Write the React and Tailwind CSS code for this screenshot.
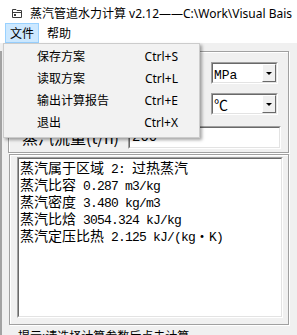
import React from 'react';

const ui = "font-['Noto_Sans','Noto_Sans_CJK_SC',sans-serif]";
const cjk = "font-['Noto_Sans_CJK_SC',sans-serif]";
const mono = "font-['Liberation_Mono','Noto_Sans_CJK_SC',monospace]";

// etched frame like a VB Frame control
const frame = 'border border-[#a0a0a0] shadow-[inset_1px_1px_0_#fff,1px_1px_0_#fff]';

const Sunken = ({ className = '', children }) => (
  <div className={`border border-t-[#a0a0a0] border-l-[#a0a0a0] border-b-white border-r-white ${className}`}>
    <div className="h-full border border-t-[#696969] border-l-[#696969] border-b-[#e3e3e3] border-r-[#e3e3e3] bg-white">
      {children}
    </div>
  </div>
);

const Combo = ({ children }) => (
  <Sunken className="w-[67px] h-[22px]">
    <div className="h-full flex items-center">
      <div className="flex-1 pl-[1px] leading-none text-black">{children}</div>
      <div className="w-[14px] h-[18px] bg-[#f0f0f0] border border-t-white border-l-white border-b-[#696969] border-r-[#696969] flex items-center justify-center">
        <div className="w-0 h-0 border-l-[3px] border-r-[3px] border-t-[3px] border-l-transparent border-r-transparent border-t-black" />
      </div>
    </div>
  </Sunken>
);

// half-width latin run in the result box
const L = ({ children }) => <span className={`${mono} text-[13px] tracking-[-0.8px]`}>{children}</span>;

const menuItems = [
  ['保存方案', 'Ctrl+S'],
  ['读取方案', 'Ctrl+L'],
  ['输出计算报告', 'Ctrl+E'],
  ['退出', 'Ctrl+X'],
];

export default function App() {
  return (
    <div className={`relative w-[297px] h-[335px] overflow-hidden bg-[#f0f0f0] ${ui}`}>
      {/* title bar */}
      <div className="h-[23px] bg-white flex items-start pt-[5px] pl-[11px] whitespace-nowrap">
        <svg width="12" height="11" viewBox="0 0 12 11" className="mt-[3px] shrink-0">
          <path d="M1.5 1.5 H5 L6 2.5 H10.5 V9.5 H1.5 Z" fill="none" stroke="#3c3c3c" strokeWidth="1" />
          <path d="M1.5 4.5 H10.5" stroke="#3c3c3c" strokeWidth="1" />
          <rect x="3" y="6" width="2" height="2" fill="#3c3c3c" />
        </svg>
        <span className="ml-[7px] text-[12px] leading-[18px] text-black">
          蒸汽管道水力计算 v2.12——C:\Work\Visual Bais
        </span>
      </div>

      {/* menu bar */}
      <div className="h-[20px] bg-white flex items-stretch text-[12px] text-black">
        <div className="ml-[5px] w-[34px] h-[20px] bg-[#cce8ff] border border-[#99d1ff] flex items-center justify-center pt-[2px]">
          文件
        </div>
        <div className="ml-[8px] flex items-center pt-[2px]">帮助</div>
      </div>

      {/* form */}
      <div className="h-[292px] border-l-2 border-l-[#a3a3a3]">
        <div className={`ml-[6px] mt-[8px] w-[281px] h-[102px] ${frame} flex flex-col`}>
          <div className="flex flex-col items-end pr-[10px] pt-[10px] gap-[9px]">
            <Combo>
              <span className={`${mono} text-[13px]`}>MPa</span>
            </Combo>
            <Combo>
              <span className={`${cjk} text-[14px]`}>℃</span>
            </Combo>
          </div>
          <div className="flex items-center mt-[11px] pl-[13px]">
            <div className={`w-[106px] ${cjk} text-[16px] leading-[23px] whitespace-nowrap`}>蒸汽流量(t/h)</div>
            <Sunken className="w-[153px] h-[23px]">
              <div className={`pl-[2px] ${mono} text-[14px] leading-[19px]`}>200</div>
            </Sunken>
          </div>
        </div>

        <div className={`ml-[7px] mt-[1px] w-[280px] h-[171px] ${frame} pl-[7px] pt-[2px]`}>
          <Sunken className="w-[266px] h-[161px]">
            <div className={`pl-[1px] pt-[1px] ${cjk} text-[14px] leading-[15px] text-black whitespace-nowrap`}>
              <div>蒸汽属于区域<L> 2: </L>过热蒸汽</div>
              <div>蒸汽比容<L> 0.287 m3/kg</L></div>
              <div>蒸汽密度<L> 3.480 kg/m3</L></div>
              <div>蒸汽比焓<L> 3054.324 kJ/kg</L></div>
              <div>
                蒸汽定压比热<L> 2.125 kJ/(kg</L>
                <span className="inline-block w-[14px] text-center">·</span>
                <L>K)</L>
              </div>
            </div>
          </Sunken>
        </div>

        <div className="mt-[4px] pl-[16px] text-[12px] leading-[16px] text-black whitespace-nowrap">
          提示:请选择计算参数后点击计算
        </div>
      </div>

      {/* open 文件 menu */}
      <div className="absolute left-[3px] top-[43px] w-[197px] bg-[#f2f2f2] border border-[#cccccc] shadow-[2px_2px_3px_rgba(0,0,0,0.35)] pt-[2px] pb-[3px] text-[12px] text-black">
        {menuItems.map(([label, key]) => (
          <div key={label} className="h-[22px] flex items-center justify-between pl-[33px] pr-[21px]">
            <span>{label}</span>
            <span>{key}</span>
          </div>
        ))}
      </div>
    </div>
  );
}
